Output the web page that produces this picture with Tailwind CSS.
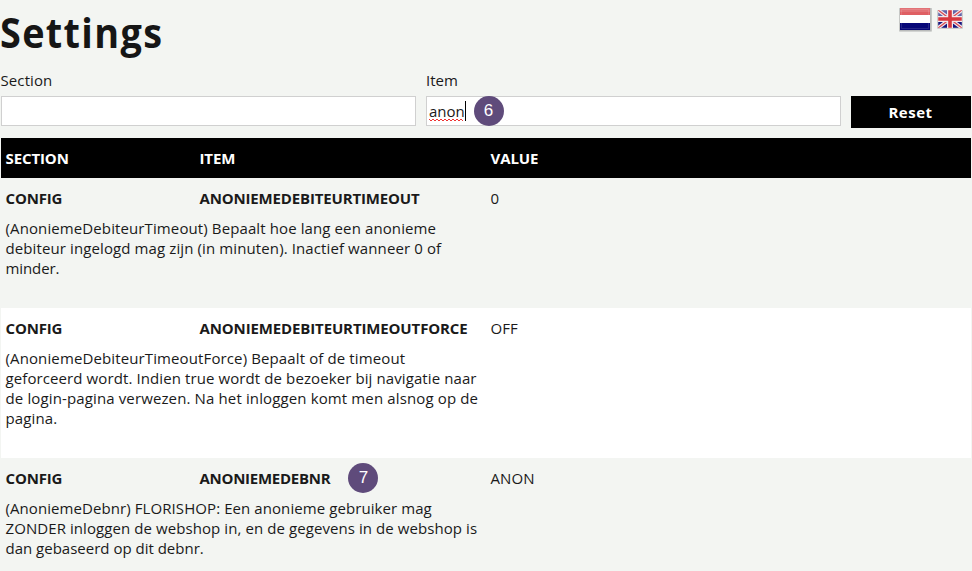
<!DOCTYPE html>
<html lang="nl">
<head>
<meta charset="utf-8">
<title>Settings</title>
<script src="https://cdn.jsdelivr.net/npm/@tailwindcss/browser@4"></script>
</head>
<body class="h-[571px] w-[972px] overflow-hidden bg-[#f3f5f2] px-px font-['Open_Sans',sans-serif] text-[15px] leading-5 text-[#1a1a1a]">
<header class="flex h-[70px] items-start justify-between">
  <h1 class="-ml-px origin-left scale-x-90 pt-1 text-[42px] leading-[56px] font-bold tracking-[1.5px] whitespace-nowrap text-[#161616]">Settings</h1>
  <div class="flex items-start pt-[7px] pr-[8px]">
    <svg class="mr-[5px]" width="33" height="25" viewBox="0 0 33 25" role="img" aria-label="Nederlands">
      <rect x="0" y="1" width="33" height="24" rx="1" fill="#d2d4d2"/>
      <rect x=".5" y="1" width="32" height="23" fill="#b9bbba"/>
      <path fill="#df5f63" d="M1 1h30v7H1z"/><path fill="#fff" d="M1 8h30v8H1z"/><path fill="#080878" d="M1 16h30v7H1z"/>
      <path fill="none" stroke="#fff" stroke-opacity=".12" d="M2.500 2.500h27v19h-27z"/>
      <path fill="#fff" fill-opacity=".12" d="M1 1h30v4H1z"/>
    </svg>
    <svg class="mt-[2px]" width="26" height="20" viewBox="0 0 26 20" role="img" aria-label="English">
      <rect x="0" y="1" width="26" height="19" rx="1" fill="#cdcfcd"/>
      <svg x="1" y="1" width="24" height="18" viewBox="0 0 24 18">
        <path fill="#6163a8" d="M0 0h24v9H0z"/><path fill="#15157c" d="M0 9h24v9H0z"/>
        <path stroke="#f0e9ee" stroke-width="3.600" d="M0 0l24 18M24 0L0 18"/>
        <path stroke="#d94d55" stroke-width="1.400" d="M0 0l24 18M24 0L0 18"/>
        <path stroke="#f0e9ee" stroke-width="6" d="M12 0v18M0 9h24"/>
        <path stroke="#d7373f" stroke-width="3.600" d="M12 0v18M0 9h24"/>
        <path fill="none" stroke="#fff" stroke-opacity=".2" d="M.5.5h23v17H.5z"/>
      </svg>
    </svg>
  </div>
</header>
<form class="flex h-[68px] gap-[10px]">
  <div class="w-[415px]">
    <label class="-ml-[0.5px] block h-[26px] tracking-[0.1px] whitespace-nowrap">Section</label>
    <div class="h-[30px] border border-[#d0d0d0] bg-white"></div>
  </div>
  <div class="w-[415px]">
    <label class="block h-[26px] whitespace-nowrap">Item</label>
    <div class="relative flex h-[30px] items-center border border-[#d0d0d0] bg-white pl-[2px]">
      <span class="whitespace-nowrap">anon</span>
      <svg class="absolute top-[21px] left-[2px]" width="36" height="4" viewBox="0 0 36 4"><path fill="none" stroke="#e33" d="M0 1l2 2 2-2 2 2 2-2 2 2 2-2 2 2 2-2 2 2 2-2 2 2 2-2 2 2 2-2 2 2 2-2 2 2"/></svg>
      <i class="absolute top-[4px] left-[38px] h-5 w-px bg-black"></i>
      <b class="absolute -top-px left-[46.500px] flex size-[30px] items-center justify-center rounded-full bg-[#5f4b7b] font-['Liberation_Sans',sans-serif] text-[17px] font-normal text-white">6</b>
    </div>
  </div>
  <button type="button" class="mt-[26px] h-8 w-[120px] bg-black pr-[1px] font-bold tracking-[0.5px] whitespace-nowrap text-white">Reset</button>
</form>
<main class="whitespace-nowrap">
  <div class="grid h-10 grid-cols-[194px_291px_1fr] items-center bg-black pl-[4.5px] font-bold tracking-[-0.1px] text-white"><div>SECTION</div><div>ITEM</div><div>VALUE</div></div>
  <section class="h-[130px] pt-[10px] pl-[4.5px]">
    <div class="grid h-[30px] grid-cols-[194px_291px_1fr]"><div class="font-bold tracking-[-0.18px]">CONFIG</div><div class="font-bold tracking-[-0.16px]">ANONIEMEDEBITEURTIMEOUT</div><div>0</div></div>
    <p class="tracking-[0.11px]">(AnoniemeDebiteurTimeout) Bepaalt hoe lang een anonieme<br>debiteur ingelogd mag zijn (in minuten). Inactief wanneer 0 of<br><span class="tracking-[-0.1px]">minder.</span></p>
  </section>
  <section class="h-[150px] bg-white pt-[10px] pl-[4.5px]">
    <div class="grid h-[30px] grid-cols-[194px_291px_1fr]"><div class="font-bold tracking-[-0.18px]">CONFIG</div><div class="font-bold tracking-[-0.13px]">ANONIEMEDEBITEURTIMEOUTFORCE</div><div>OFF</div></div>
    <p class="tracking-[0.12px]">(AnoniemeDebiteurTimeoutForce) Bepaalt of de timeout<br><span class="tracking-[0.1px]">geforceerd wordt. Indien true wordt de bezoeker bij navigatie naar</span><br><span class="tracking-[0.13px]">de login-pagina verwezen. Na het inloggen komt men alsnog op de</span><br>pagina.</p>
  </section>
  <section class="relative h-[113px] pt-[10px] pl-[4.5px]">
    <div class="grid h-[30px] grid-cols-[194px_291px_1fr]"><div class="font-bold tracking-[-0.18px]">CONFIG</div><div class="font-bold tracking-[-0.27px]">ANONIEMEDEBNR</div><div class="tracking-[0.1px]">ANON</div></div>
    <p class="tracking-[0.08px]">(AnoniemeDebnr) FLORISHOP: Een anonieme gebruiker mag<br>ZONDER inloggen de webshop in, en de gegevens in de webshop is<br><span class="tracking-[0px]">dan gebaseerd op dit debnr.</span></p>
    <b class="absolute top-[4.500px] left-[347.400px] flex size-[30px] items-center justify-center rounded-full bg-[#5f4b7b] font-['Liberation_Sans',sans-serif] text-[17px] font-normal text-white">7</b>
  </section>
</main>
</body>
</html>
